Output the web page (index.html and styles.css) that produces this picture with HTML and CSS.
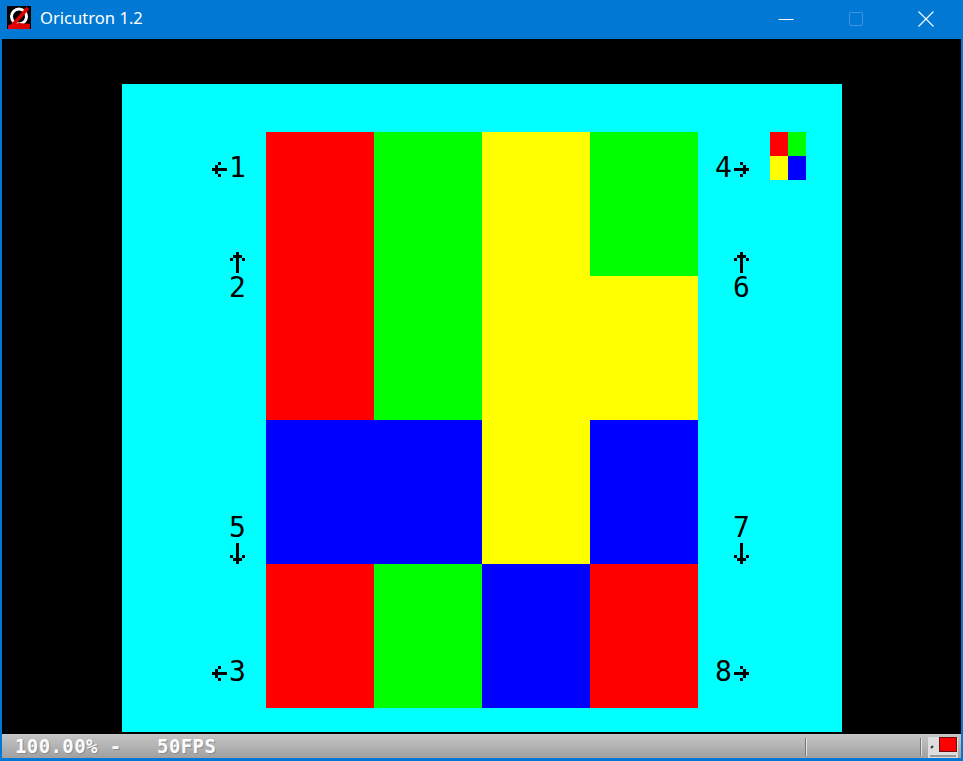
FILE: index.html
```html
<!DOCTYPE html>
<html lang="en">
<head>
<meta charset="utf-8">
<title>Oricutron 1.2</title>
<link rel="stylesheet" href="styles.css">
</head>
<body>
<div class="window">
  <header class="titlebar">
    <svg class="app-icon" width="24" height="23" viewBox="0 0 24 23">
      <rect width="24" height="23" fill="#000"/>
      <ellipse cx="12" cy="10.5" rx="7.5" ry="7.5" fill="none" stroke="#fff" stroke-width="3"/>
      <path d="M3 22 L21 2" stroke="#e00000" stroke-width="3.5"/>
      <path d="M1 23 L1 19 L12 17 L23 18 L23 23 Z" fill="#e00000"/>
    </svg>
    <span class="title">Oricutron 1.2</span>
    <div class="controls">
      <div class="ctl">
        <svg width="16" height="16" viewBox="0 0 16 16"><path d="M0.5 8.5 H15.5" stroke="#fff" stroke-width="1"/></svg>
      </div>
      <div class="ctl">
        <svg width="16" height="16" viewBox="0 0 16 16"><rect x="1.5" y="1.5" width="13" height="13" rx="1.5" fill="none" stroke="#3f93dd" stroke-width="1"/></svg>
      </div>
      <div class="ctl">
        <svg width="16" height="16" viewBox="0 0 16 16"><path d="M0.5 0.5 L15.5 15.5 M15.5 0.5 L0.5 15.5" stroke="#fff" stroke-width="1.1"/></svg>
      </div>
    </div>
  </header>

  <main class="viewport">
    <div class="screen">
      <div class="blocks">
        <div class="c red"></div><div class="c green"></div><div class="c yellow"></div><div class="c green"></div>
        <div class="c red"></div><div class="c green"></div><div class="c yellow"></div><div class="c yellow"></div>
        <div class="c blue"></div><div class="c blue"></div><div class="c yellow"></div><div class="c blue"></div>
        <div class="c red"></div><div class="c green"></div><div class="c blue"></div><div class="c red"></div>
      </div>
      <div class="chip">
        <div class="red"></div><div class="green"></div><div class="yellow"></div><div class="blue"></div>
      </div>

      <!-- label 1 -->
      <svg class="arr a1" viewBox="0 0 6 8"><path d="M2 2h1v1h-1z M1 3h1v1h-1z M0 4h5v1h-5z M1 5h1v1h-1z M2 6h1v1h-1z"/></svg>
      <span class="t d1">1</span>
      <!-- label 2 -->
      <svg class="arr a2" viewBox="0 0 6 8"><path d="M2 0h1v7h-1z M1 1h3v1h-3z M0 2h1v1h-1z M4 2h1v1h-1z"/></svg>
      <span class="t d2">2</span>
      <!-- label 5 -->
      <span class="t d5">5</span>
      <svg class="arr a5" viewBox="0 0 6 8"><path d="M2 1h1v7h-1z M1 6h3v1h-3z M0 5h1v1h-1z M4 5h1v1h-1z"/></svg>
      <!-- label 3 -->
      <svg class="arr a3" viewBox="0 0 6 8"><path d="M2 2h1v1h-1z M1 3h1v1h-1z M0 4h5v1h-5z M1 5h1v1h-1z M2 6h1v1h-1z"/></svg>
      <span class="t d3">3</span>
      <!-- label 4 -->
      <span class="t d4">4</span>
      <svg class="arr a4" viewBox="0 0 6 8"><path d="M2 2h1v1h-1z M3 3h1v1h-1z M0 4h5v1h-5z M3 5h1v1h-1z M2 6h1v1h-1z"/></svg>
      <!-- label 6 -->
      <svg class="arr a6" viewBox="0 0 6 8"><path d="M2 0h1v7h-1z M1 1h3v1h-3z M0 2h1v1h-1z M4 2h1v1h-1z"/></svg>
      <span class="t d6">6</span>
      <!-- label 7 -->
      <span class="t d7">7</span>
      <svg class="arr a7" viewBox="0 0 6 8"><path d="M2 1h1v7h-1z M1 6h3v1h-3z M0 5h1v1h-1z M4 5h1v1h-1z"/></svg>
      <!-- label 8 -->
      <span class="t d8">8</span>
      <svg class="arr a8" viewBox="0 0 6 8"><path d="M2 2h1v1h-1z M3 3h1v1h-1z M0 4h5v1h-5z M3 5h1v1h-1z M2 6h1v1h-1z"/></svg>
    </div>
  </main>

  <footer class="statusbar">
    <span class="status-text">100.00% -   50FPS</span>
    <span class="divider"></span>
    <span class="status-gap"></span>
    <span class="divider"></span>
    <svg class="status-icon" width="30" height="21" viewBox="0 0 30 21">
      <rect x="0" y="0" width="30" height="21" fill="#dedede"/>
      <path d="M5 9 L3 11" stroke="#333" stroke-width="2"/>
      <path d="M2 19 H28" stroke="#555" stroke-width="1"/>
      <rect x="11.5" y="0.5" width="17" height="14" fill="#ff0000" stroke="#6a1010" stroke-width="1"/>
    </svg>
  </footer>
</div>
</body>
</html>
```

FILE: styles.css
```css
* { box-sizing: border-box; }

html, body {
  margin: 0;
  padding: 0;
  background: #0078d4;
}

.window {
  width: 963px;
  height: 761px;
  background: #0078d4;
  padding: 0 2px 3px 2px;
  display: flex;
  flex-direction: column;
  overflow: hidden;
}

/* Title bar */
.titlebar {
  height: 39px;
  flex: 0 0 39px;
  display: flex;
  align-items: flex-start;
  color: #fff;
  margin: 0 -2px;
}

.app-icon {
  margin: 6px 0 0 7px;
  flex: 0 0 auto;
}

.title {
  margin: 7px 0 0 9px;
  font-family: "Noto Sans", "Open Sans", sans-serif;
  font-size: 16.6px;
  line-height: 22px;
  color: #fff;
}

.controls {
  margin-left: auto;
  display: flex;
  height: 39px;
  margin-right: 2px;
}

.ctl {
  width: 70px;
  height: 39px;
  display: flex;
  align-items: center;
  justify-content: center;
  padding-bottom: 1px;
}

/* Emulator viewport */
.viewport {
  height: 695px;
  flex: 0 0 695px;
  background: #000;
  padding: 45px 0 0 120px;
}

.screen {
  width: 720px;
  height: 648px;
  background: #00ffff;
  display: grid;
  grid-template-columns: repeat(40, 18px);
  grid-template-rows: repeat(27, 24px);
}

.blocks {
  grid-column: 9 / span 24;
  grid-row: 3 / span 24;
  display: grid;
  grid-template-columns: repeat(4, 108px);
  grid-template-rows: repeat(4, 144px);
}

.chip {
  grid-column: 37 / span 2;
  grid-row: 3 / span 2;
  display: grid;
  grid-template-columns: repeat(2, 18px);
  grid-template-rows: repeat(2, 24px);
}

.red { background: #ff0000; }
.green { background: #00ff00; }
.yellow { background: #ffff00; }
.blue { background: #0000ff; }

/* Oric character cells */
.t {
  font-family: "DejaVu Sans Mono", "Liberation Mono", monospace;
  font-size: 28px;
  line-height: 24px;
  color: #000;
  white-space: nowrap;
  margin-left: -1px;
}

.arr {
  width: 18px;
  height: 24px;
  fill: #000;
  shape-rendering: crispEdges;
}

.a1 { grid-column: 6; grid-row: 4; }
.d1 { grid-column: 7; grid-row: 4; }
.a2 { grid-column: 7; grid-row: 8; }
.d2 { grid-column: 7; grid-row: 9; }
.d5 { grid-column: 7; grid-row: 19; }
.a5 { grid-column: 7; grid-row: 20; }
.a3 { grid-column: 6; grid-row: 25; }
.d3 { grid-column: 7; grid-row: 25; }
.d4 { grid-column: 34; grid-row: 4; }
.a4 { grid-column: 35; grid-row: 4; }
.a6 { grid-column: 35; grid-row: 8; }
.d6 { grid-column: 35; grid-row: 9; }
.d7 { grid-column: 35; grid-row: 19; }
.a7 { grid-column: 35; grid-row: 20; }
.d8 { grid-column: 34; grid-row: 25; }
.a8 { grid-column: 35; grid-row: 25; }

/* Status bar */
.statusbar {
  height: 24px;
  flex: 0 0 24px;
  background: linear-gradient(#c6c6c6, #a0a0a0);
  display: flex;
  align-items: center;
}

.status-text {
  width: 803px;
  padding-left: 13px;
  font-family: "DejaVu Sans Mono", "Liberation Mono", monospace;
  font-weight: bold;
  font-size: 19px;
  letter-spacing: 0.4px;
  line-height: 24px;
  color: #fbfbfb;
  text-shadow: 1px 1px 0 #8c8c8c;
  white-space: pre;
}

.divider {
  width: 2px;
  height: 18px;
  border-left: 1px solid #777;
  border-right: 1px solid #e2e2e2;
  margin-top: 2px;
}

.status-gap {
  width: 113px;
}

.status-icon {
  margin-left: 6px;
  margin-top: 2px;
}
```
